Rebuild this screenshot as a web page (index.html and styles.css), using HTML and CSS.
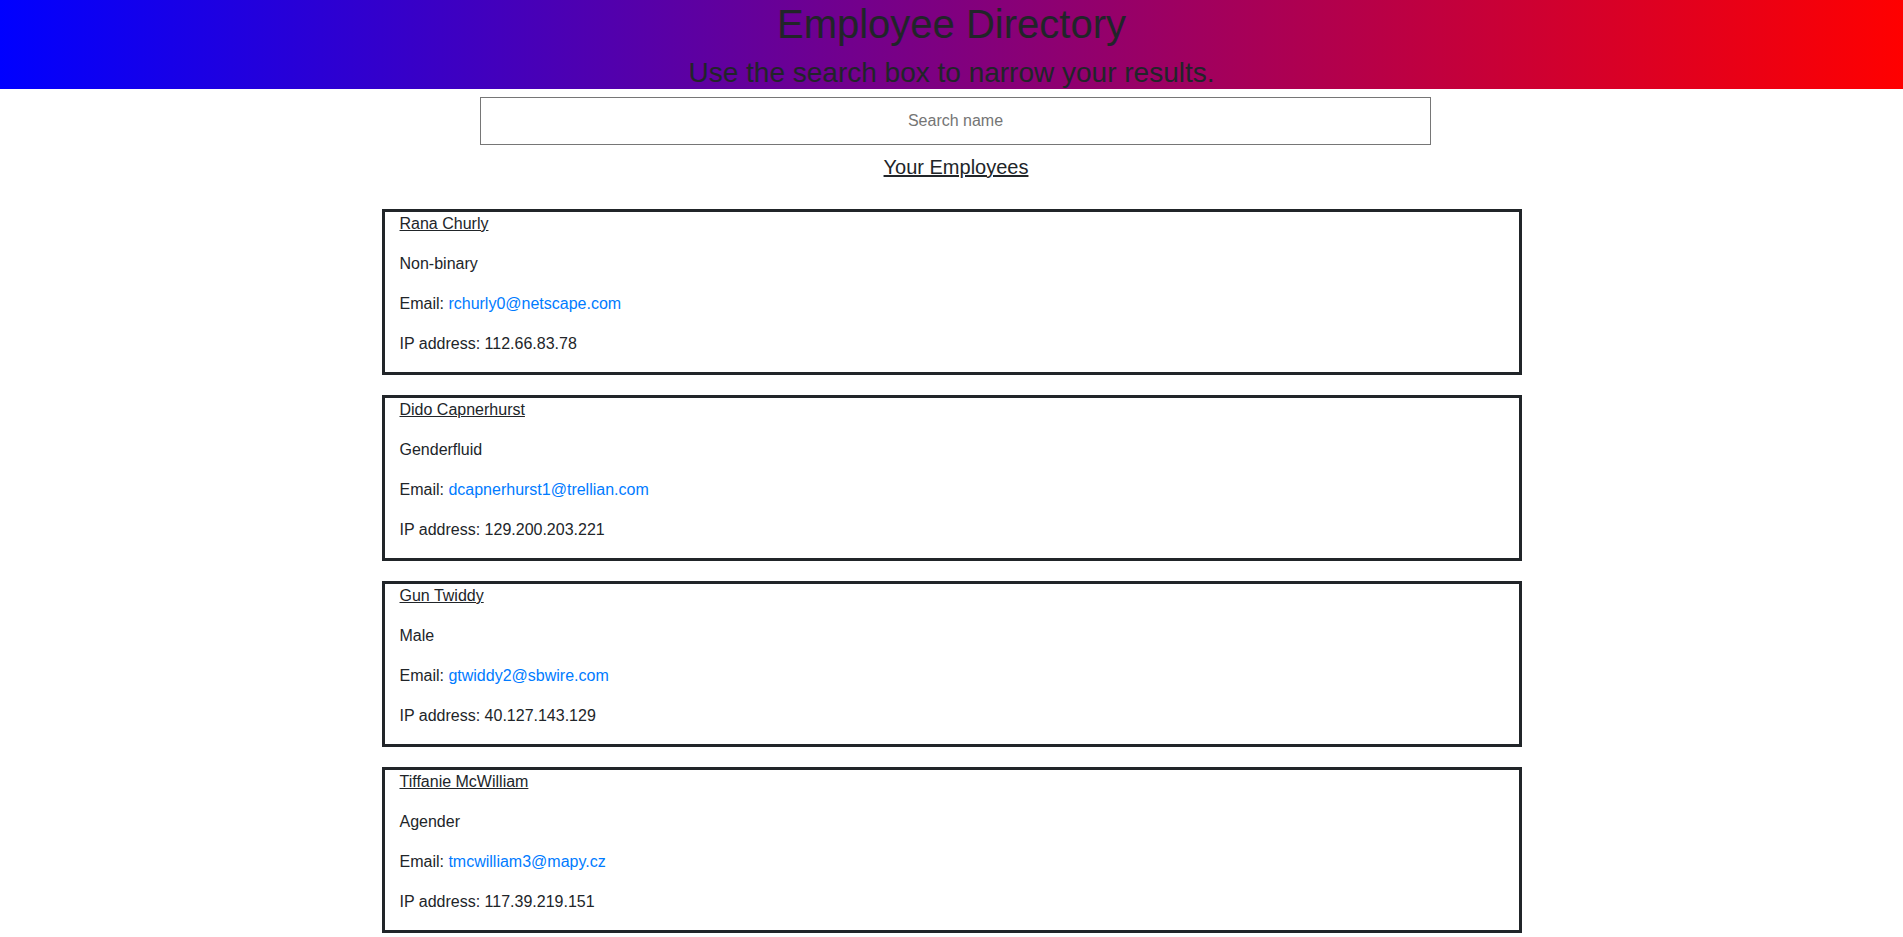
FILE: index.html
```html
<!DOCTYPE html>
<html lang="en">
<head>
<meta charset="utf-8">
<title>Employee Directory</title>
<link rel="stylesheet" href="styles.css">
</head>
<body>
<header class="hero">
  <h1 class="hero-title">Employee Directory</h1>
  <p class="hero-sub">Use the search box to narrow your results.</p>
</header>
<main class="main">
  <div class="controls">
    <input class="search" type="text" placeholder="Search name">
    <h2 class="list-title">Your Employees</h2>
  </div>
  <section class="list">
    <div class="card">
      <p class="name">Rana Churly</p>
      <p>Non-binary</p>
      <p>Email: <a href="#">rchurly0@netscape.com</a></p>
      <p>IP address: 112.66.83.78</p>
    </div>
    <div class="card">
      <p class="name">Dido Capnerhurst</p>
      <p>Genderfluid</p>
      <p>Email: <a href="#">dcapnerhurst1@trellian.com</a></p>
      <p>IP address: 129.200.203.221</p>
    </div>
    <div class="card">
      <p class="name">Gun Twiddy</p>
      <p>Male</p>
      <p>Email: <a href="#">gtwiddy2@sbwire.com</a></p>
      <p>IP address: 40.127.143.129</p>
    </div>
    <div class="card">
      <p class="name">Tiffanie McWilliam</p>
      <p>Agender</p>
      <p>Email: <a href="#">tmcwilliam3@mapy.cz</a></p>
      <p>IP address: 117.39.219.151</p>
    </div>
  </section>
</main>
</body>
</html>
```
FILE: styles.css
```css
* { box-sizing: border-box; }
html, body {
  margin: 0;
  padding: 0;
}
body {
  font-family: "Liberation Sans", Arial, sans-serif;
  font-size: 16px;
  line-height: 1.5;
  color: #212529;
  background: #fff;
}
.hero {
  height: 89px;
  background: linear-gradient(to right, #0000ff, #ff0000);
  text-align: center;
}
.hero-title {
  margin: 0 0 8px;
  font-size: 40px;
  font-weight: 400;
  line-height: 1.2;
}
.hero-sub {
  margin: 0;
  font-size: 28px;
  line-height: 1.2;
}
.main {
  display: flex;
  flex-direction: column;
  align-items: center;
}
.controls {
  width: 100%;
  display: flex;
  flex-direction: column;
  align-items: center;
}
.search {
  display: block;
  align-self: flex-start;
  width: 50%;
  height: 48px;
  margin: 8px 0 0 calc(25% + 4px);
  border: 1px solid #767676;
  border-radius: 0;
  text-align: center;
  font-family: "Liberation Sans", Arial, sans-serif;
  font-size: 16px;
  color: #212529;
  padding: 0;
}
.search::placeholder {
  color: #757575;
}
.list-title {
  margin: 10px 0 30px;
  padding-left: 9px;
  font-size: 20px;
  font-weight: 400;
  line-height: 24px;
  text-decoration: underline;
}
.list {
  width: 1140px;
  display: flex;
  flex-direction: column;
  gap: 20px;
}
.card {
  border: 3px solid #212529;
  padding: 0 15px;
}
.card p {
  margin: 0 0 16px;
  line-height: 24px;
}
.card .name {
  text-decoration: underline;
}
.card a {
  color: #007bff;
  text-decoration: none;
}
```
